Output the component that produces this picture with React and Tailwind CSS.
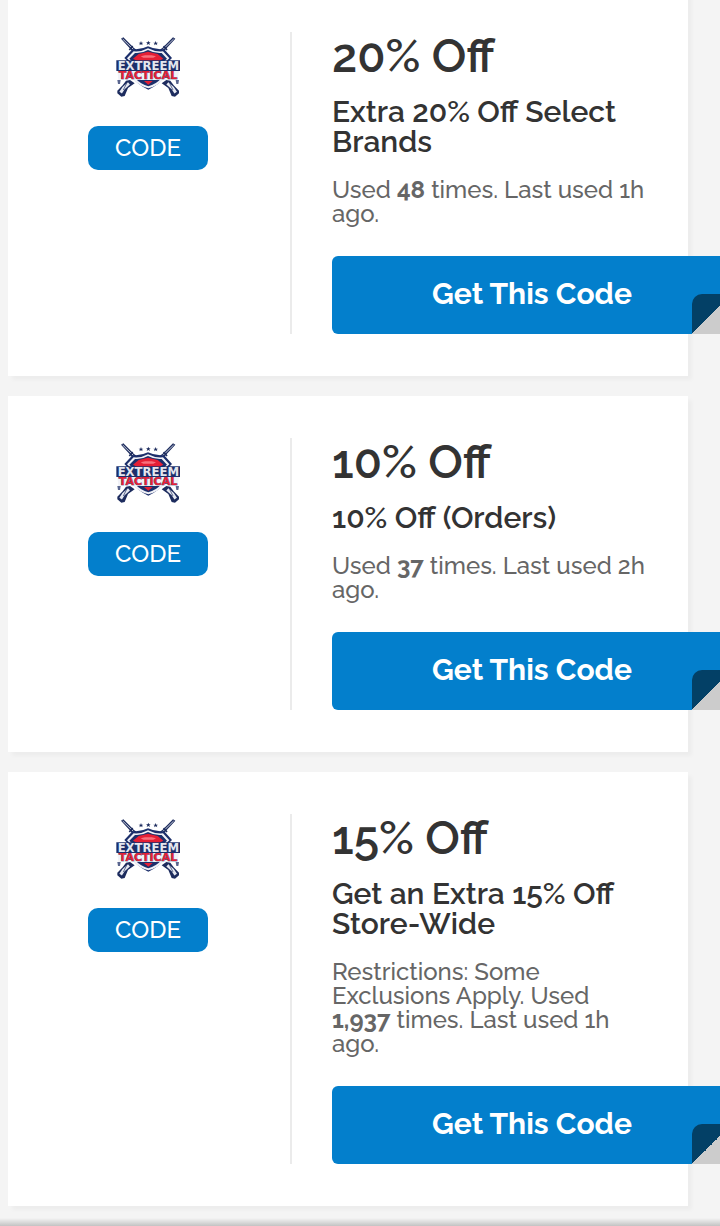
const coupons = [
  {
    id: 1,
    amount: "20% Off",
    title: "Extra 20% Off Select Brands",
    used: "48",
    lastUsed: "1h",
  },
  {
    id: 2,
    amount: "10% Off",
    title: "10% Off (Orders)",
    used: "37",
    lastUsed: "2h",
  },
  {
    id: 3,
    amount: "15% Off",
    title: "Get an Extra 15% Off Store-Wide",
    restrictions: "Restrictions: Some Exclusions Apply.",
    used: "1,937",
    lastUsed: "1h",
  },
];

function Rifle() {
  return (
    <g>
      <path d="M39 26 L46 22 L78 54 L90 62 L84 72 L74 66 L68 58 Z" fill="#1d2c5e" />
      <path d="M44 27 L80 62" stroke="#c9cedb" strokeWidth="3" />
      <path d="M64 60 L74 48" stroke="#1d2c5e" strokeWidth="5" />
      <path
        d="M66 150 L80 160 L60 174 L50 198 L40 200 L28 190 L28 182 L44 166 L54 152 Z"
        fill="#1d2c5e"
      />
      <path d="M63 160 L47 174 L38 188" fill="none" stroke="#e6e9f2" strokeWidth="9" />
      <path d="M56 160 L46 180" stroke="#1d2c5e" strokeWidth="2" />
      <path d="M28 150 L38 150 L36 162 L30 162 Z" fill="#5a668f" />
    </g>
  );
}

function StoreLogo() {
  return (
    <svg
      viewBox="0 6 240 216"
      className="h-[72px] w-20"
      role="img"
      aria-label="Extreem Tactical"
    >
      <Rifle />
      <g transform="translate(241 0) scale(-1 1)">
        <Rifle />
      </g>
      <path
        d="M74 57 Q98 60 120 49 Q142 60 168 57 L192 84 L180 96 Q184 150 121 179 Q58 150 61 96 L49 84 Z"
        fill="#1c2f6b"
      />
      <path
        d="M77 64 Q101 66 120 55 Q140 66 165 64 L184 85 L172 96 L68 96 L57 85 Z"
        fill="#f1f2f7"
      />
      <path
        d="M81 69 Q101 71 120 60 Q140 71 161 69 L177 86 L166 96 L74 96 L64 86 Z"
        fill="#1c2f6b"
      />
      <path d="M92 72 L120 65 L149 72 L166 86 L147 96 L93 96 L75 86 Z" fill="#e51f35" />
      <path d="M98 79 L111 76 L131 76 L144 79 L136 83 L106 83 Z" fill="#f7707c" />
      <path d="M74 146 Q92 167 121 175 Q150 167 168 146 Z" fill="#f1f2f7" />
      <path d="M83 146 Q98 162 121 169 Q144 162 159 146 Z" fill="#1c2f6b" />
      <path d="M108 153 H134 L121 164 Z" fill="#e51f35" />
      <g fill="#1d2c5e">
        <path d="M99 33 l2 5 h5 l-4 3 2 5 -5 -3 -5 3 2 -5 -4 -3 h5 Z" />
        <path d="M121 32 l2 5 h5 l-4 3 2 5 -5 -3 -5 3 2 -5 -4 -3 h5 Z" />
        <path d="M143 33 l2 5 h5 l-4 3 2 5 -5 -3 -5 3 2 -5 -4 -3 h5 Z" />
      </g>
      <path d="M25 91 H216 V123 H25 Z" fill="#1c2f6b" />
      <path d="M28 123 H213 L209 150 H31 Z" fill="#f1f2f7" />
      <g
        textAnchor="middle"
        fontFamily="'DejaVu Sans', sans-serif"
        fontWeight="700"
        strokeLinejoin="round"
        paintOrder="stroke"
      >
        <text x="121" y="120" fontSize="35" fill="#e4e6ee">
          EXTREEM
        </text>
        <text x="120" y="148" fontSize="33" fill="#e51f35" stroke="#1c2f6b" strokeWidth="2">
          TACTICAL
        </text>
      </g>
    </svg>
  );
}

function CouponCard({ coupon }) {
  return (
    <article className="flex bg-white px-10 py-[42px] shadow-[4px_4px_4px_rgba(0,0,0,0.03)]">
      <div className="flex w-[244px] shrink-0 flex-col items-center border-r-2 border-[#ebebeb] pr-[42px]">
        <StoreLogo />
        <span className="mt-[22px] flex h-11 w-[120px] items-center justify-center rounded-[10px] bg-[#037fcc] text-2xl font-medium text-white">
          CODE
        </span>
      </div>

      <div className="ml-10 min-w-0 flex-1">
        <h2 className="text-[46px] leading-[48px] font-semibold text-[#333]">
          {coupon.amount}
        </h2>
        <h3 className="mt-[17px] text-[30px] leading-[30px] font-semibold text-[#333]">
          {coupon.title}
        </h3>
        <p className="mt-[21px] text-2xl leading-6 font-medium text-[#666]">
          {coupon.restrictions} Used <b>{coupon.used}</b> times. Last used{" "}
          {coupon.lastUsed} ago.
        </p>
        {/* The button runs past the card edge and ends in a folded corner */}
        <div className="relative mt-[30px] -mr-[84px]">
          <button
            type="button"
            className="h-[78px] w-full rounded-md bg-[#037fcc] pb-1 text-[30px] font-bold text-white"
          >
            Get This Code
          </button>
          <span className="pointer-events-none absolute right-0 bottom-0 size-10 bg-[#037fcc]">
            <span className="block size-10 rounded-tl-[10px] bg-linear-to-br from-[#034066] from-50% to-[#ccc] to-50%" />
          </span>
        </div>
      </div>
    </article>
  );
}

export default function App() {
  return (
    <div className="relative min-h-screen overflow-hidden bg-[#f4f4f4] font-['Raleway','Lato',sans-serif]">
      <main className="-mt-[10px] flex flex-col gap-5 pr-8 pb-5 pl-2">
        {coupons.map((coupon) => (
          <CouponCard key={coupon.id} coupon={coupon} />
        ))}
      </main>
      <div className="absolute inset-x-0 bottom-0 h-2 bg-linear-to-b from-transparent to-black/20" />
    </div>
  );
}
